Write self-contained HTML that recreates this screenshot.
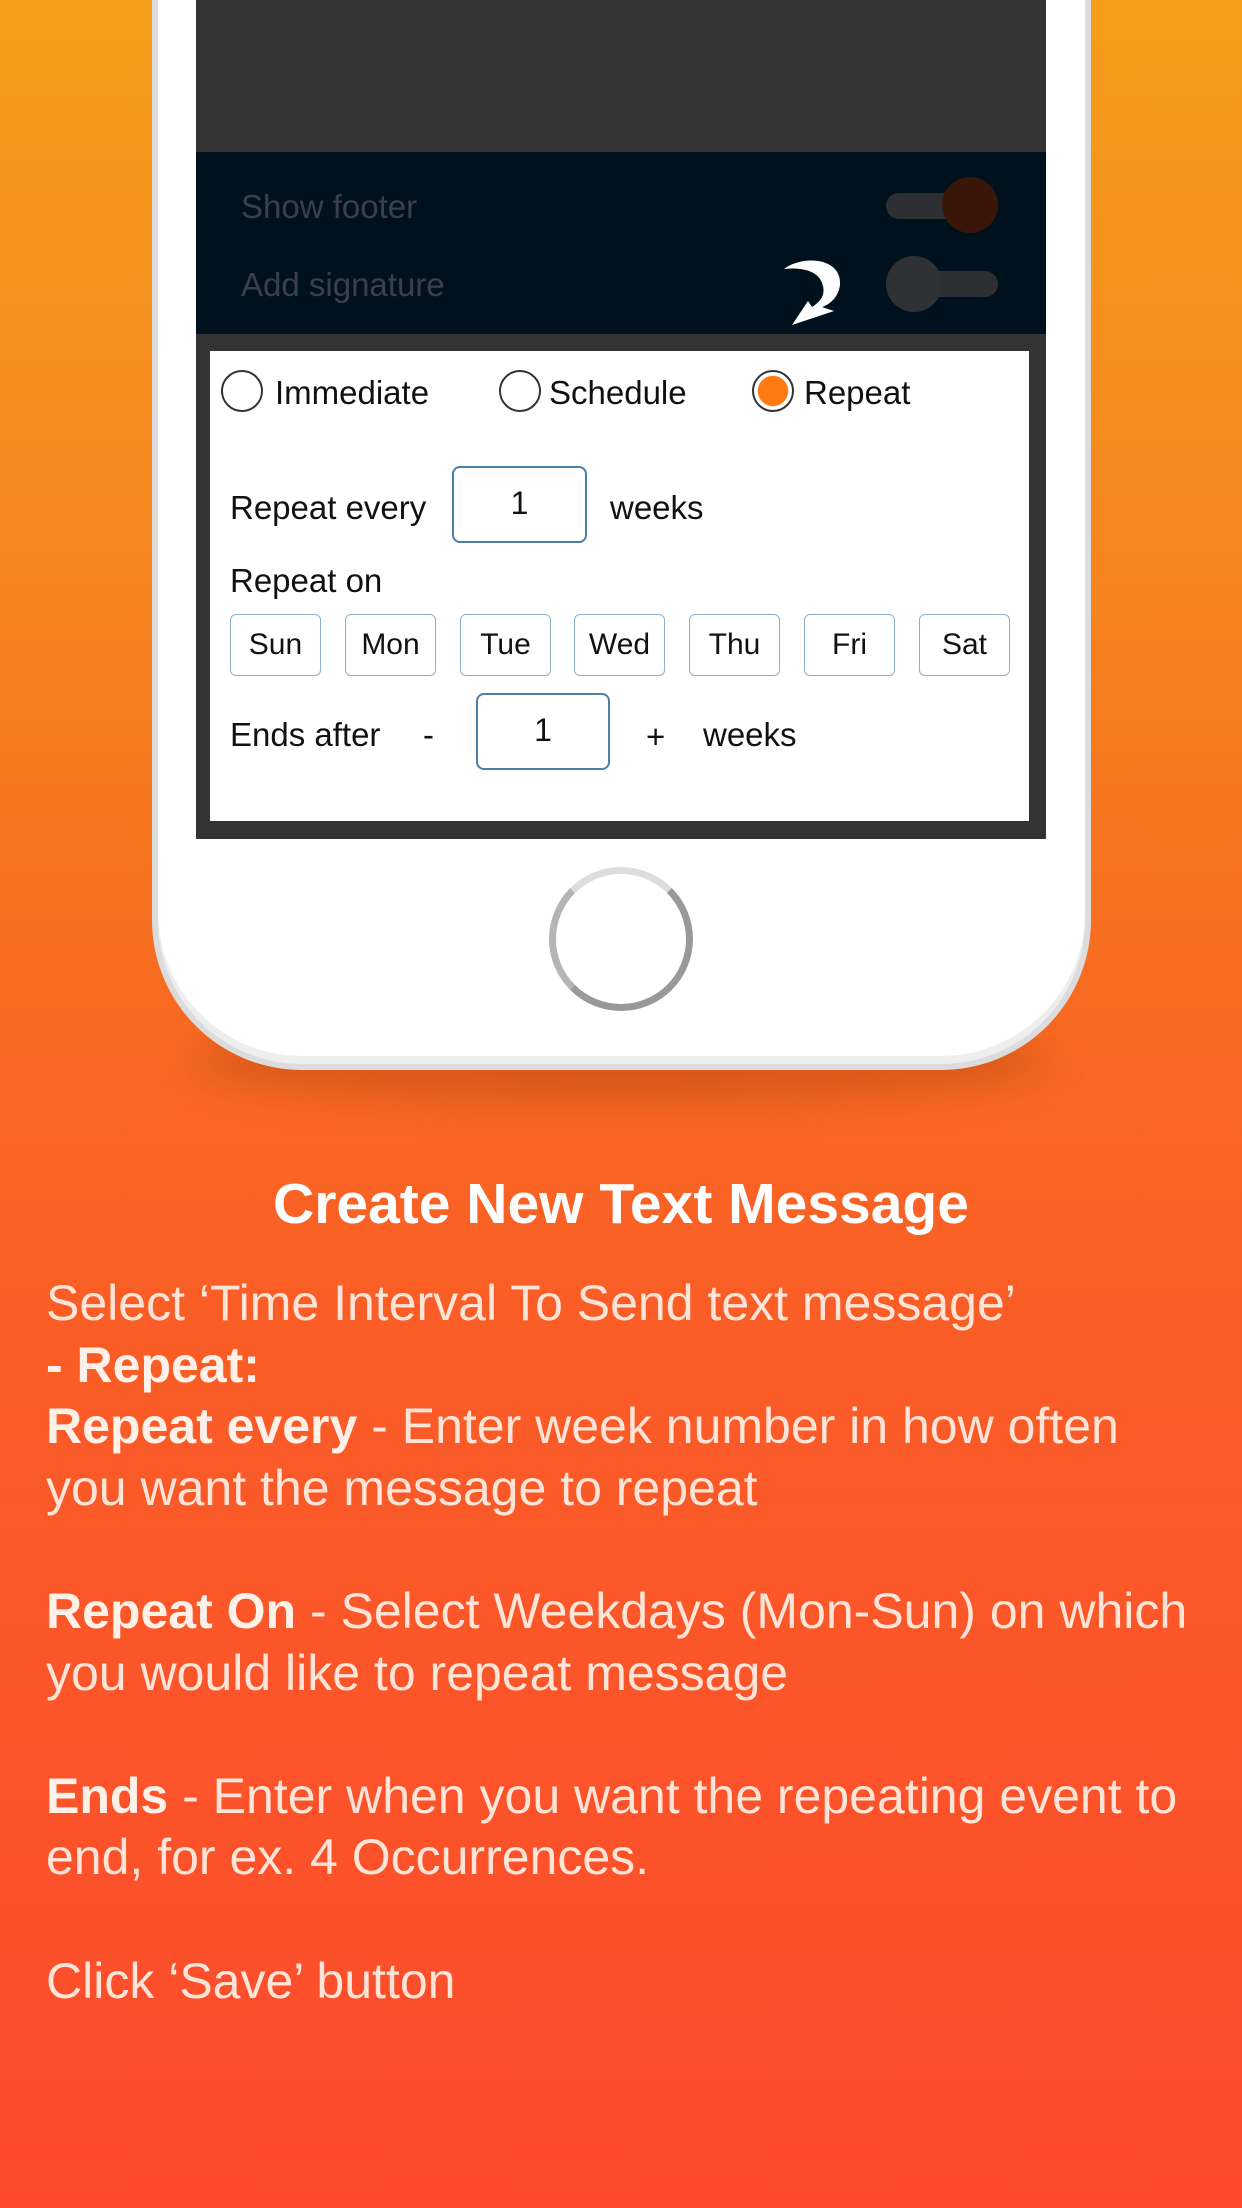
<!DOCTYPE html>
<html><head><meta charset="utf-8"><style>
*{margin:0;padding:0;box-sizing:border-box}
body{width:1242px;height:2208px;overflow:hidden;position:relative;font-family:"Liberation Sans",sans-serif;
background:linear-gradient(180deg,#f59d1b 0%,#f5871e 25%,#f7701f 40%,#fa5d26 60%,#fd4a2d 100%);}
.shadow{position:absolute;left:190px;top:1020px;width:862px;height:80px;border-radius:50%;background:rgba(120,40,0,.25);filter:blur(20px)}
.phone{position:absolute;left:152px;top:-200px;width:939px;height:1270px;background:#fff;border:6px solid #dcdcdc;border-top:none;border-radius:0 0 150px 150px;box-shadow:inset 0 -8px 0 #eee}
.scr{position:absolute;left:196px;top:0;width:850px;height:839px;background:#333}
.navy{position:absolute;left:196px;top:152px;width:850px;height:182px;background:#00111e}
.lbl{position:absolute;color:#3a4048;font-size:33px}
.track{position:absolute;width:112px;height:26px;border-radius:13px;background:#2d2f33}
.knob{position:absolute;width:56px;height:56px;border-radius:50%}
.panel{position:absolute;left:210px;top:351px;width:819px;height:470px;background:#fff}
.t{position:absolute;font-size:33px;color:#111;line-height:1}
.rad{position:absolute;width:42px;height:42px;border-radius:50%;border:2px solid #333;background:#fff}
.box{position:absolute;border:2px solid #4a7fa8;border-radius:8px;text-align:center;font-size:32px;color:#111}
.day{position:absolute;top:614px;width:91px;height:62px;border:1.5px solid #8ab0cc;border-radius:6px;font-size:30px;text-align:center;line-height:60px;color:#111}
.home{position:absolute;left:549px;top:867px;width:144px;height:144px;border-radius:50%;border:7px solid #b5b5b5;border-top-color:#ddd;border-right-color:#999;border-bottom-color:#999}
h1{position:absolute;top:1170px;left:0;width:1242px;text-align:center;color:#fff;font-size:57px;font-weight:bold;line-height:68px}
.body{position:absolute;left:46px;top:1273px;width:1190px;color:#ffe4d7;font-size:50px;line-height:61.6px;white-space:nowrap}
.body b{color:#fff0e8}
</style></head><body>
<div class="shadow"></div>
<div class="phone"></div>
<div class="scr"></div>
<div class="navy"></div>
<div class="lbl" style="left:241px;top:188px">Show footer</div>
<div class="lbl" style="left:241px;top:266px">Add signature</div>
<div class="track" style="left:886px;top:193px"></div>
<div class="knob" style="left:942px;top:177px;background:#3a1608"></div>
<div class="track" style="left:886px;top:271px"></div>
<div class="knob" style="left:886px;top:256px;background:#2f3134"></div>
<svg style="position:absolute;left:782px;top:255px" width="66" height="72" viewBox="0 0 66 72"><path d="M2 14 C20 0 60 2 58 30 C56 44 46 50 40 52 L52 56 L10 70 L26 46 L30 52 C40 46 44 38 40 28 C36 16 20 12 2 14Z" fill="#fff"/></svg>
<div class="panel"></div>
<div class="rad" style="left:221px;top:370px"></div><div class="t" style="left:275px;top:376px">Immediate</div>
<div class="rad" style="left:499px;top:370px"></div><div class="t" style="left:549px;top:376px">Schedule</div>
<div class="rad" style="left:752px;top:370px;background:radial-gradient(circle,#ff7a10 0 55%,#fff 58%)"></div><div class="t" style="left:804px;top:376px">Repeat</div>
<div class="t" style="left:230px;top:491px">Repeat every</div>
<div class="box" style="left:452px;top:466px;width:135px;height:77px;line-height:70px">1</div>
<div class="t" style="left:610px;top:491px">weeks</div>
<div class="t" style="left:230px;top:564px">Repeat on</div>
<div class="day" style="left:230px">Sun</div><div class="day" style="left:345px">Mon</div><div class="day" style="left:460px">Tue</div><div class="day" style="left:574px">Wed</div><div class="day" style="left:689px">Thu</div><div class="day" style="left:804px">Fri</div><div class="day" style="left:919px">Sat</div>
<div class="t" style="left:230px;top:718px">Ends after</div>
<div class="t" style="left:423px;top:718px">-</div>
<div class="box" style="left:476px;top:693px;width:134px;height:77px;line-height:70px">1</div>
<div class="t" style="left:646px;top:720px">+</div>
<div class="t" style="left:703px;top:718px">weeks</div>
<div class="home"></div>
<h1>Create New Text Message</h1>
<div class="body">Select ‘Time Interval To Send text message’<br><b>- Repeat:</b><br><b>Repeat every</b> - Enter week number in how often<br>you want the message to repeat<br><br><b>Repeat On</b> - Select Weekdays (Mon-Sun) on which<br>you would like to repeat message<br><br><b>Ends</b> - Enter when you want the repeating event to<br>end, for ex. 4 Occurrences.<br><br>Click ‘Save’ button</div>
</body></html>
